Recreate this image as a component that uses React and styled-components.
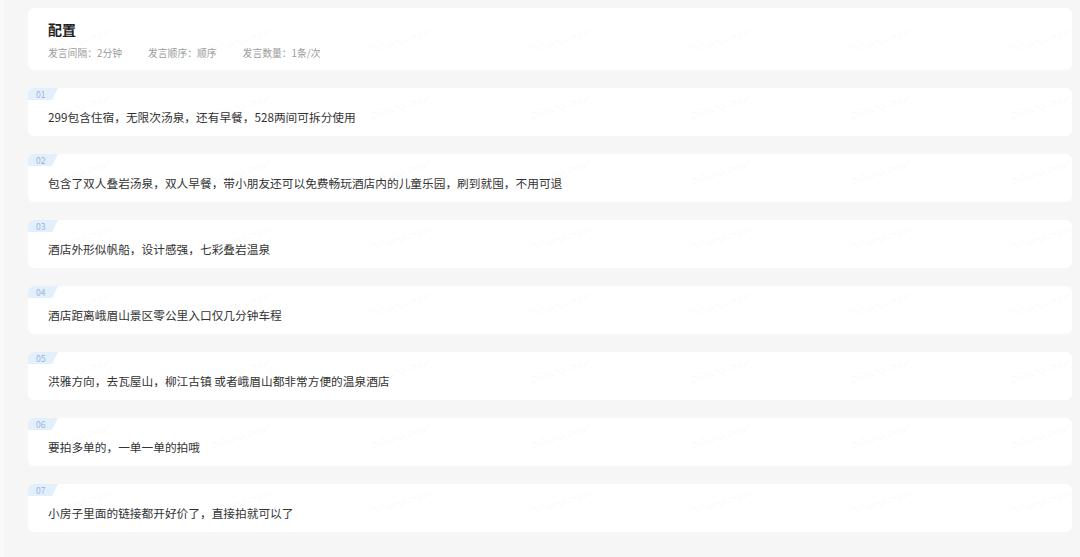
import React from 'react';
import styled, { createGlobalStyle } from 'styled-components';

const GlobalStyle = createGlobalStyle`
  html, body {
    margin: 0;
    padding: 0;
    background: #f6f6f7;
  }
  body {
    font-family: "Noto Sans CJK SC", "Noto Sans", "Liberation Sans", sans-serif;
    color: #333;
  }
`;

const Page = styled.div`
  position: relative;
  width: 1080px;
  height: 557px;
  overflow: hidden;
  box-sizing: border-box;
  padding: 8px 8px 0 28px;
  border-left: 4px solid #fafafa;
  display: flex;
  flex-direction: column;
  gap: 18px;
`;

const HeaderCard = styled.section`
  background: #fff;
  border-radius: 6px;
  height: 62px;
  box-sizing: border-box;
  padding: 11px 20px 0;
  margin-left: -4px;
`;

const Title = styled.h1`
  margin: 0;
  font-size: 14px;
  line-height: 20px;
  font-weight: 700;
  color: #222;
`;

const MetaRow = styled.div`
  display: flex;
  gap: 26px;
  margin-top: 7px;
  font-size: 9.8px;
  line-height: 14px;
  color: #9a9a9a;
`;

const List = styled.div`
  display: flex;
  flex-direction: column;
  gap: 18px;
  margin-left: -4px;
`;

const ItemCard = styled.div`
  background: #fff;
  border-radius: 6px;
  height: 48px;
  box-sizing: border-box;
  overflow: hidden;
`;

const Badge = styled.div`
  width: 30px;
  height: 12px;
  box-sizing: border-box;
  padding-left: 8px;
  background: #e4effc;
  color: #94b6e0;
  font-size: 8.5px;
  line-height: 12px;
  clip-path: polygon(0 0, 100% 0, calc(100% - 6px) 100%, 0 100%);
`;

const ItemText = styled.p`
  margin: 9px 0 0 20px;
  font-size: 11.7px;
  line-height: 16px;
  color: #333;
  white-space: nowrap;
`;

const WatermarkLayer = styled.div`
  position: absolute;
  inset: 0;
  pointer-events: none;
`;

const Mark = styled.span`
  position: absolute;
  font-family: "Liberation Sans", sans-serif;
  font-size: 10px;
  color: rgba(0, 0, 0, 0.045);
  transform: rotate(-18deg);
  white-space: nowrap;
`;

const meta = ['发言间隔：2分钟', '发言顺序：顺序', '发言数量：1条/次'];

const items = [
  '299包含住宿，无限次汤泉，还有早餐，528两间可拆分使用',
  '包含了双人叠岩汤泉，双人早餐，带小朋友还可以免费畅玩酒店内的儿童乐园，刷到就囤，不用可退',
  '酒店外形似帆船，设计感强，七彩叠岩温泉',
  '酒店距离峨眉山景区零公里入口仅几分钟车程',
  '洪雅方向，去瓦屋山，柳江古镇 或者峨眉山都非常方便的温泉酒店',
  '要拍多单的，一单一单的拍哦',
  '小房子里面的链接都开好价了，直接拍就可以了',
];

// watermark grid, kept inside the page edges
const marks = [];
for (let r = 0; r < 8; r++) {
  for (let c = 0; c < 7; c++) {
    marks.push({ x: 45 + c * 160, y: 35 + r * 66 });
  }
}

const App = () => {
  return (
    <>
      <GlobalStyle />
      <Page>
        <HeaderCard>
          <Title>配置</Title>
          <MetaRow>
            {meta.map((m) => (
              <span key={m}>{m}</span>
            ))}
          </MetaRow>
        </HeaderCard>
        <List>
          {items.map((text, i) => (
            <ItemCard key={i}>
              <Badge>{String(i + 1).padStart(2, '0')}</Badge>
              <ItemText>{text}</ItemText>
            </ItemCard>
          ))}
        </List>
        <WatermarkLayer>
          {marks.map((m, i) => (
            <Mark key={i} style={{ left: m.x, top: m.y }}>
              DiPiaoduoduo
            </Mark>
          ))}
        </WatermarkLayer>
      </Page>
    </>
  );
};

export default App;
